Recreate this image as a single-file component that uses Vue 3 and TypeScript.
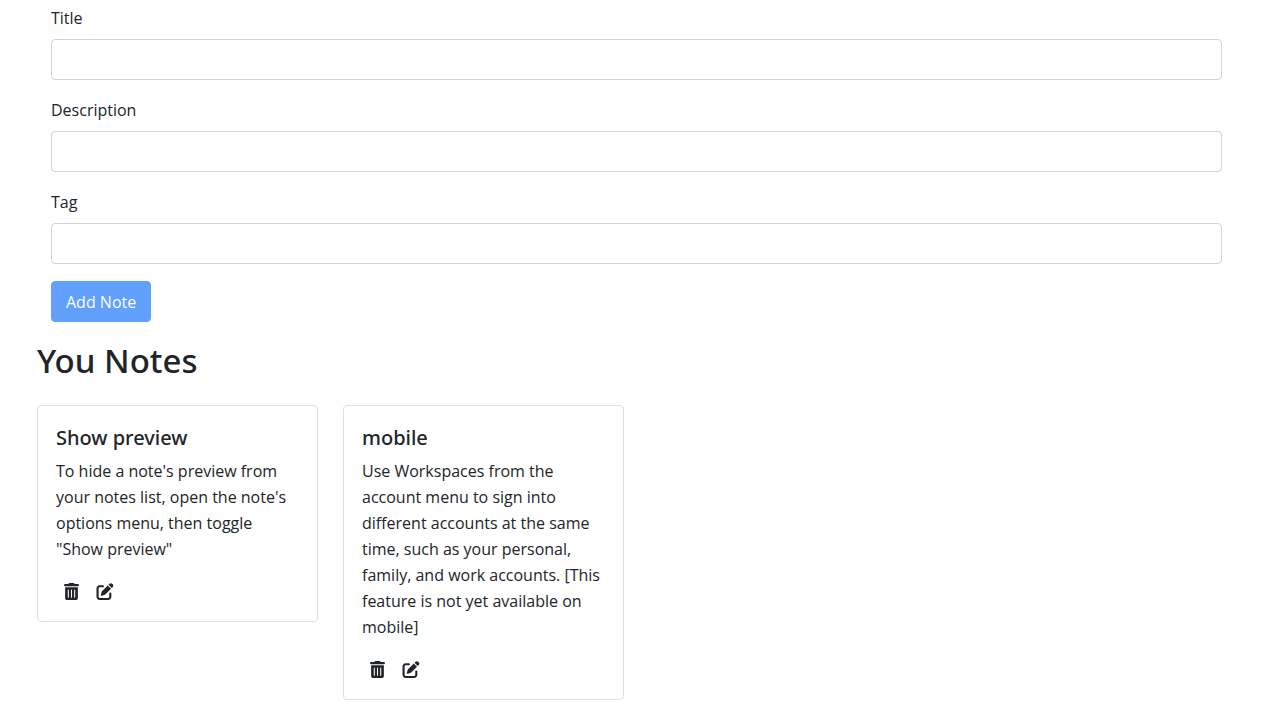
<script setup lang="ts">
import { computed, reactive, ref } from 'vue'

interface Note {
  id: number
  title: string
  description: string
  tag: string
}

type DraftKey = 'title' | 'description' | 'tag'

const fields: { key: DraftKey; label: string }[] = [
  { key: 'title', label: 'Title' },
  { key: 'description', label: 'Description' },
  { key: 'tag', label: 'Tag' },
]

const draft = reactive<Record<DraftKey, string>>({ title: '', description: '', tag: '' })

const notes = ref<Note[]>([
  {
    id: 1,
    title: 'Show preview',
    description:
      'To hide a note\'s preview from your notes list, open the note\'s options menu, then toggle "Show preview"',
    tag: '',
  },
  {
    id: 2,
    title: 'mobile',
    description:
      'Use Workspaces from the account menu to sign into different accounts at the same time, such as your personal, family, and work accounts. [This feature is not yet available on mobile]',
    tag: '',
  },
])

const incomplete = computed(() => draft.title.length < 5 || draft.description.length < 5)

function clearDraft() {
  draft.title = ''
  draft.description = ''
  draft.tag = ''
}

function addNote() {
  notes.value.push({ id: Date.now(), ...draft })
  clearDraft()
}

function removeNote(id: number) {
  notes.value = notes.value.filter((n) => n.id !== id)
}

function editNote(note: Note) {
  draft.title = note.title
  draft.description = note.description
  draft.tag = note.tag
  removeNote(note.id)
}
</script>

<template>
  <main class="page">
    <form class="note-form" @submit.prevent="addNote">
      <div v-for="field in fields" :key="field.key" class="field">
        <label :for="field.key">{{ field.label }}</label>
        <input :id="field.key" v-model="draft[field.key]" type="text" :name="field.key" />
      </div>
      <button type="submit" class="submit" :disabled="incomplete">Add Note</button>
    </form>

    <h2>You Notes</h2>
    <section class="notes">
      <article v-for="note in notes" :key="note.id" class="card">
        <h5>{{ note.title }}</h5>
        <p>{{ note.description }}</p>
        <div class="actions">
          <button type="button" class="icon" aria-label="Delete note" @click="removeNote(note.id)">
            <svg class="trash" viewBox="0 0 448 512" aria-hidden="true">
              <path
                d="M135.2 17.7C140.6 6.8 151.7 0 163.8 0H284.2c12.1 0 23.2 6.8 28.6 17.7L320 32h96c17.7 0 32 14.3 32 32s-14.3 32-32 32H32C14.3 96 0 81.7 0 64S14.3 32 32 32h96l7.2-14.3zM32 128H416V448c0 35.3-28.7 64-64 64H96c-35.3 0-64-28.7-64-64V128zm96 64c-8.8 0-16 7.2-16 16V432c0 8.8 7.2 16 16 16s16-7.2 16-16V208c0-8.8-7.2-16-16-16zm96 0c-8.8 0-16 7.2-16 16V432c0 8.8 7.2 16 16 16s16-7.2 16-16V208c0-8.8-7.2-16-16-16zm96 0c-8.8 0-16 7.2-16 16V432c0 8.8 7.2 16 16 16s16-7.2 16-16V208c0-8.8-7.2-16-16-16z"
              />
            </svg>
          </button>
          <button type="button" class="icon" aria-label="Edit note" @click="editNote(note)">
            <svg class="pen" viewBox="0 0 512 512" aria-hidden="true">
              <path
                d="M471.6 21.7c-21.9-21.9-57.3-21.9-79.2 0L362.3 51.7l97.9 97.9 30.1-30.1c21.9-21.9 21.9-57.3 0-79.2L471.6 21.7zm-299.2 220c-6.1 6.1-10.8 13.6-13.5 21.9l-29.6 88.8c-2.9 8.6-.6 18.1 5.8 24.6s15.9 8.7 24.6 5.8l88.8-29.6c8.2-2.7 15.7-7.4 21.9-13.5L437.7 172.3 339.7 74.3 172.4 241.7zM96 64C43 64 0 107 0 160V416c0 53 43 96 96 96H352c53 0 96-43 96-96V320c0-17.7-14.3-32-32-32s-32 14.3-32 32v96c0 17.7-14.3 32-32 32H96c-17.7 0-32-14.3-32-32V160c0-17.7 14.3-32 32-32h96c17.7 0 32-14.3 32-32s-14.3-32-32-32H96z"
              />
            </svg>
          </button>
        </div>
      </article>
    </section>
  </main>
</template>

<style>
body {
  margin: 0;
  background: #fff;
}
</style>

<style scoped>
.page {
  padding: 5px 44px 0 37px;
  color: #212529;
  font-family: 'Segoe UI', 'Open Sans', 'Noto Sans', sans-serif;
  font-size: 16px;
  line-height: 26px;
}

.page *,
.page {
  box-sizing: border-box;
}

.note-form {
  padding: 0 14px;
}

.field {
  display: flex;
  flex-direction: column;
  gap: 8px;
  margin-bottom: 17px;
}

.field label {
  align-self: flex-start;
}

.field input {
  width: 100%;
  height: 41px;
  padding: 6px 13px;
  border: 1px solid #ced4da;
  border-radius: 4px;
  background: #fff;
  color: inherit;
  font: inherit;
}

button {
  font: inherit;
  cursor: pointer;
}

.submit {
  display: block;
  height: 41px;
  padding: 0 14px;
  border: 1px solid #0d6efd;
  border-radius: 4px;
  background: #0d6efd;
  color: #fff;
}

.submit:disabled {
  opacity: 0.65;
  cursor: default;
}

h2,
h5 {
  font-family: 'Segoe UI', 'Noto Sans', 'Open Sans', sans-serif;
  font-weight: 500;
}

h2 {
  margin: 18px 0 23px;
  font-size: 33px;
  line-height: 42px;
}

.notes {
  display: grid;
  grid-template-columns: repeat(4, minmax(0, 1fr));
  gap: 25px;
  align-items: start;
}

.card {
  padding: 19px 17px 17px 18px;
  border: 1px solid #dfdfdf;
  border-radius: 4px;
}

h5 {
  margin: 0 0 7px;
  font-size: 20px;
  line-height: 26px;
}

p {
  margin: 0 0 16px;
}

.actions {
  display: flex;
  align-items: center;
  gap: 17px;
  height: 26px;
  padding-left: 8px;
}

.icon {
  display: flex;
  padding: 0;
  border: 0;
  background: none;
  color: inherit;
}

.icon svg {
  height: 17px;
  fill: currentColor;
}

.trash {
  width: 15px;
}

.pen {
  width: 18px;
}
</style>
